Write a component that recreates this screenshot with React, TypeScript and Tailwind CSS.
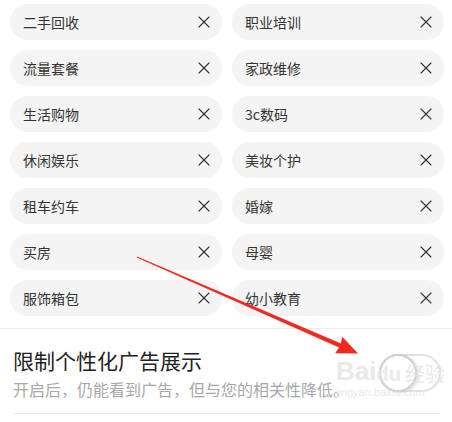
import { X } from 'lucide-react';

const tags: [string, string][] = [
  ['二手回收', '职业培训'],
  ['流量套餐', '家政维修'],
  ['生活购物', '3c数码'],
  ['休闲娱乐', '美妆个护'],
  ['租车约车', '婚嫁'],
  ['买房', '母婴'],
  ['服饰箱包', '幼小教育'],
];

function Tag({ label }: { label: string }) {
  return (
    <div className="h-9 rounded-full bg-[#f4f4f4] pl-[13px] pr-[8px] flex items-center justify-between">
      <span className="text-[14px] leading-none text-[#333]">{label}</span>
      <X className="w-[20px] h-[20px] text-[#333]" strokeWidth={1.3} />
    </div>
  );
}

export default function App() {
  return (
    <div className="relative w-[452px] h-[422px] overflow-hidden bg-white font-['Noto_Sans_CJK_SC','Noto_Sans',sans-serif]">
      <div className="grid grid-cols-2 gap-[10px] pl-[10px] pr-[8px] pt-[4px]">
        {tags.flat().map(t => <Tag key={t} label={t} />)}
      </div>

      <div className="mt-[12px] border-t border-[#ececec]">
        <div className="flex items-center pl-[13px] pr-[11px] pt-[17px] pb-[14px]">
          <div className="flex-1 min-w-0">
            <div className="text-[21px] leading-[28px] text-[#222]">限制个性化广告展示</div>
            <div className="mt-[5px] text-[16px] leading-[20px] text-[#a8a8a8] whitespace-nowrap">
              开启后，仍能看到广告，但与您的相关性降低。
            </div>
          </div>
          <div className="relative w-[62px] h-[38px] shrink-0 rounded-full border-2 border-[#e2e2e2] bg-white/90">
            <div className="absolute left-[-2px] top-[-2px] w-[38px] h-[38px] rounded-full border-2 border-[#cfcfcf] bg-white shadow-[2px_1px_3px_rgba(0,0,0,0.12)]" />
          </div>
        </div>
        <div className="ml-[13px] mr-[12px] border-t border-[#ececec]" />
      </div>

      {/* watermark */}
      <div className="pointer-events-none absolute left-[336px] top-[358px] text-[#e4e4e4] opacity-80">
        <div className="flex items-end text-[26px] leading-none font-bold font-['Liberation_Sans',sans-serif]">
          <span>Bai</span>
          <span className="text-[20px]">du</span>
          <span className="ml-1 text-[20px] font-normal font-['Noto_Sans_CJK_SC',sans-serif]">经验</span>
        </div>
        <div className="text-[11px] leading-none mt-[3px] font-['Liberation_Sans',sans-serif]">jingyan.baidu.com</div>
      </div>

      {/* red arrow */}
      <svg className="pointer-events-none absolute inset-0" width="452" height="422" viewBox="0 0 452 422">
        <polygon
          points="137.2,256.4 340.9,343.5 342.3,336.7 358,353.5 335.1,353.3 339.1,347.5 136.8,257.6"
          fill="#f02a20"
        />
      </svg>
    </div>
  );
}
